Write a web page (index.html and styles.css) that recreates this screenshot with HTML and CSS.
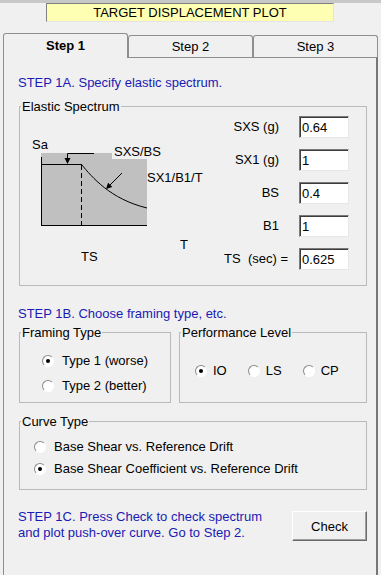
FILE: index.html
```html
<!DOCTYPE html>
<html lang="en">
<head>
    <meta charset="UTF-8">
    <title>Target Displacement Plot</title>
    <link rel="stylesheet" href="styles.css">
</head>
<body>
    <div class="frame-top"></div>
    <h1 class="title">TARGET DISPLACEMENT PLOT</h1>

    <div class="tabs">
        <div class="tab active">Step 1</div>
        <div class="tab">Step 2</div>
        <div class="tab">Step 3</div>
    </div>

    <div class="panel">
        <p class="step">STEP 1A. Specify elastic spectrum.</p>

        <fieldset class="group spectrum">
            <legend>Elastic Spectrum</legend>
            <div class="spectrum-body">
                <svg class="chart" width="200" height="165" viewBox="0 0 200 165">
                    <rect x="21" y="39" width="106" height="72" fill="#c0c0c0"/>
                    <rect x="92" y="30" width="54" height="15" fill="#f0f0f0"/>
                    <g stroke="#000" stroke-width="1" fill="none">
                        <line x1="21.5" y1="43" x2="21.5" y2="112"/>
                        <line x1="21" y1="111.5" x2="127" y2="111.5"/>
                        <line x1="21" y1="50.5" x2="62" y2="50.5"/>
                        <line x1="61.5" y1="51" x2="61.5" y2="111" stroke-dasharray="5 3"/>
                        <path d="M61.5 50.5 C 72 63, 90 85, 127 94"/>
                        <polyline points="74,39.5 47.5,39.5 47.5,45"/>
                        <line x1="102" y1="59" x2="89" y2="72"/>
                    </g>
                    <polygon points="44.5,44 50.5,44 47.5,50" fill="#000"/>
                    <polygon points="86,75 92.3,72.9 88.1,68.7" fill="#000"/>
                    <g class="chart-text">
                        <text x="12" y="35">Sa</text>
                        <text x="94" y="42">SXS/BS</text>
                        <text x="127" y="68">SX1/B1/T</text>
                        <text x="160" y="135">T</text>
                        <text x="61" y="147">TS</text>
                    </g>
                </svg>
                <div class="params">
                    <label>SXS (g)</label><input type="text" value="0.64">
                    <label>SX1 (g)</label><input type="text" value="1">
                    <label>BS</label><input type="text" value="0.4">
                    <label>B1</label><input type="text" value="1">
                    <label class="ts">TS&nbsp; (sec) =</label><input type="text" value="0.625">
                </div>
            </div>
        </fieldset>

        <p class="step step-b">STEP 1B. Choose framing type, etc.</p>

        <div class="pair">
            <fieldset class="group framing">
                <legend>Framing Type</legend>
                <div class="opts">
                    <div class="radio"><span class="dot on"></span>Type 1 (worse)</div>
                    <div class="radio"><span class="dot"></span>Type 2 (better)</div>
                </div>
            </fieldset>
            <fieldset class="group perf">
                <legend>Performance Level</legend>
                <div class="opts">
                    <div class="radio"><span class="dot on"></span>IO</div>
                    <div class="radio"><span class="dot"></span>LS</div>
                    <div class="radio"><span class="dot"></span>CP</div>
                </div>
            </fieldset>
        </div>

        <fieldset class="group curve">
            <legend>Curve Type</legend>
            <div class="opts">
                <div class="radio"><span class="dot"></span>Base Shear vs. Reference Drift</div>
                <div class="radio"><span class="dot on"></span>Base Shear Coefficient vs. Reference Drift</div>
            </div>
        </fieldset>

        <div class="check-row">
            <p class="step">STEP 1C. Press Check to check spectrum<br>and plot push-over curve. Go to Step 2.</p>
            <button class="btn">Check</button>
        </div>
    </div>
</body>
</html>
```

FILE: styles.css
```css
body {
    margin: 0;
    background: #f0f0f0;
    font: 13px/15px "Liberation Sans", Arial, sans-serif;
    color: #000;
}
.frame-top {
    height: 3px;
    background: #c8c8c8;
}
.title {
    margin: 0 0 0 46px;
    width: 288px;
    height: 19px;
    box-sizing: border-box;
    border: 1px solid;
    border-color: #808080 #e4e4e4 #e4e4e4 #808080;
    background: #ffffb4;
    font-size: 13px;
    font-weight: normal;
    line-height: 17px;
    text-align: center;
}
.tabs {
    display: flex;
    align-items: flex-end;
    height: 24px;
    margin: 11px 0 0 3px;
}
.tab {
    box-sizing: border-box;
    width: 125px;
    height: 22px;
    border: 1px solid #8e8e8e;
    border-bottom: none;
    border-radius: 3px 3px 0 0;
    text-align: center;
    line-height: 21px;
}
.tab.active {
    position: relative;
    z-index: 1;
    height: 25px;
    margin-bottom: -1px;
    background: #f0f0f0;
    font-weight: bold;
    line-height: 24px;
}
.panel {
    box-sizing: border-box;
    width: 375px;
    height: 518px;
    margin-left: 3px;
    padding: 17px 9px 0 14px;
    border: 1px solid #8e8e8e;
    border-right: 2px solid #777;
    border-bottom: none;
}
.step {
    margin: 0;
    color: #1a1ab4;
    line-height: 16px;
}
.group {
    margin: 0;
    padding: 0;
    border: 1px solid #bababa;
    min-width: 0;
}
.group legend {
    padding: 0 1px;
    margin-left: 1px;
}
.spectrum {
    margin: 8px 0 0 1px;
    padding-bottom: 6px;
}
.spectrum-body {
    display: flex;
    align-items: flex-start;
}
.chart {
    display: block;
    flex: none;
}
.chart-text text {
    font: 13px "Liberation Sans", Arial, sans-serif;
}
.params {
    display: grid;
    grid-template-columns: auto 50px;
    row-gap: 11px;
    margin: 2px 17px 0 auto;
}
.params label {
    text-align: right;
    padding-right: 20px;
    line-height: 22px;
    white-space: nowrap;
}
.params label.ts {
    padding-right: 11px;
}
.params input {
    box-sizing: border-box;
    width: 50px;
    height: 22px;
    margin: 0;
    padding: 0 2px;
    border: 1px solid;
    border-color: #7a7a7a #e6e6e6 #e6e6e6 #7a7a7a;
    box-shadow: inset 1px 1px #3c3c3c;
    background: #fff;
    font: 13px "Liberation Sans", Arial, sans-serif;
    outline: none;
}
.step-b {
    margin-top: 20px;
}
.pair {
    display: flex;
    gap: 8px;
    margin: 3px 0 0 1px;
}
.framing {
    width: 152px;
    box-sizing: border-box;
}
.framing .opts {
    padding: 13px 0 9px 22px;
}
.framing .radio + .radio {
    margin-top: 10px;
}
.perf {
    flex: 1;
}
.perf .opts {
    display: flex;
    gap: 21px;
    padding: 23px 0 0 15px;
}
.perf .dot {
    margin-right: 6px;
}
.curve {
    margin: 11px 0 0 1px;
}
.curve .opts {
    padding: 10px 0 13px 14px;
}
.curve .radio + .radio {
    margin-top: 7px;
}
.radio {
    display: flex;
    align-items: center;
    line-height: 15px;
    white-space: nowrap;
}
.dot {
    position: relative;
    box-sizing: border-box;
    width: 12px;
    height: 12px;
    margin-right: 8px;
    border-radius: 50%;
    border: 1px solid;
    border-color: #8a8a8a #fff #fff #8a8a8a;
    background: #fff;
}
.dot.on::after {
    content: "";
    position: absolute;
    left: 3px;
    top: 3px;
    width: 4px;
    height: 4px;
    border-radius: 50%;
    background: #000;
}
.check-row {
    display: flex;
    justify-content: space-between;
    align-items: flex-start;
    margin-top: 19px;
}
.btn {
    width: 75px;
    height: 30px;
    margin-top: 2px;
    padding: 0;
    border: 1px solid;
    border-color: #fff #6a6a6a #6a6a6a #fff;
    box-shadow: inset -1px -1px #a0a0a0;
    background: #f0f0f0;
    font: 13px "Liberation Sans", Arial, sans-serif;
    color: #000;
}
```
